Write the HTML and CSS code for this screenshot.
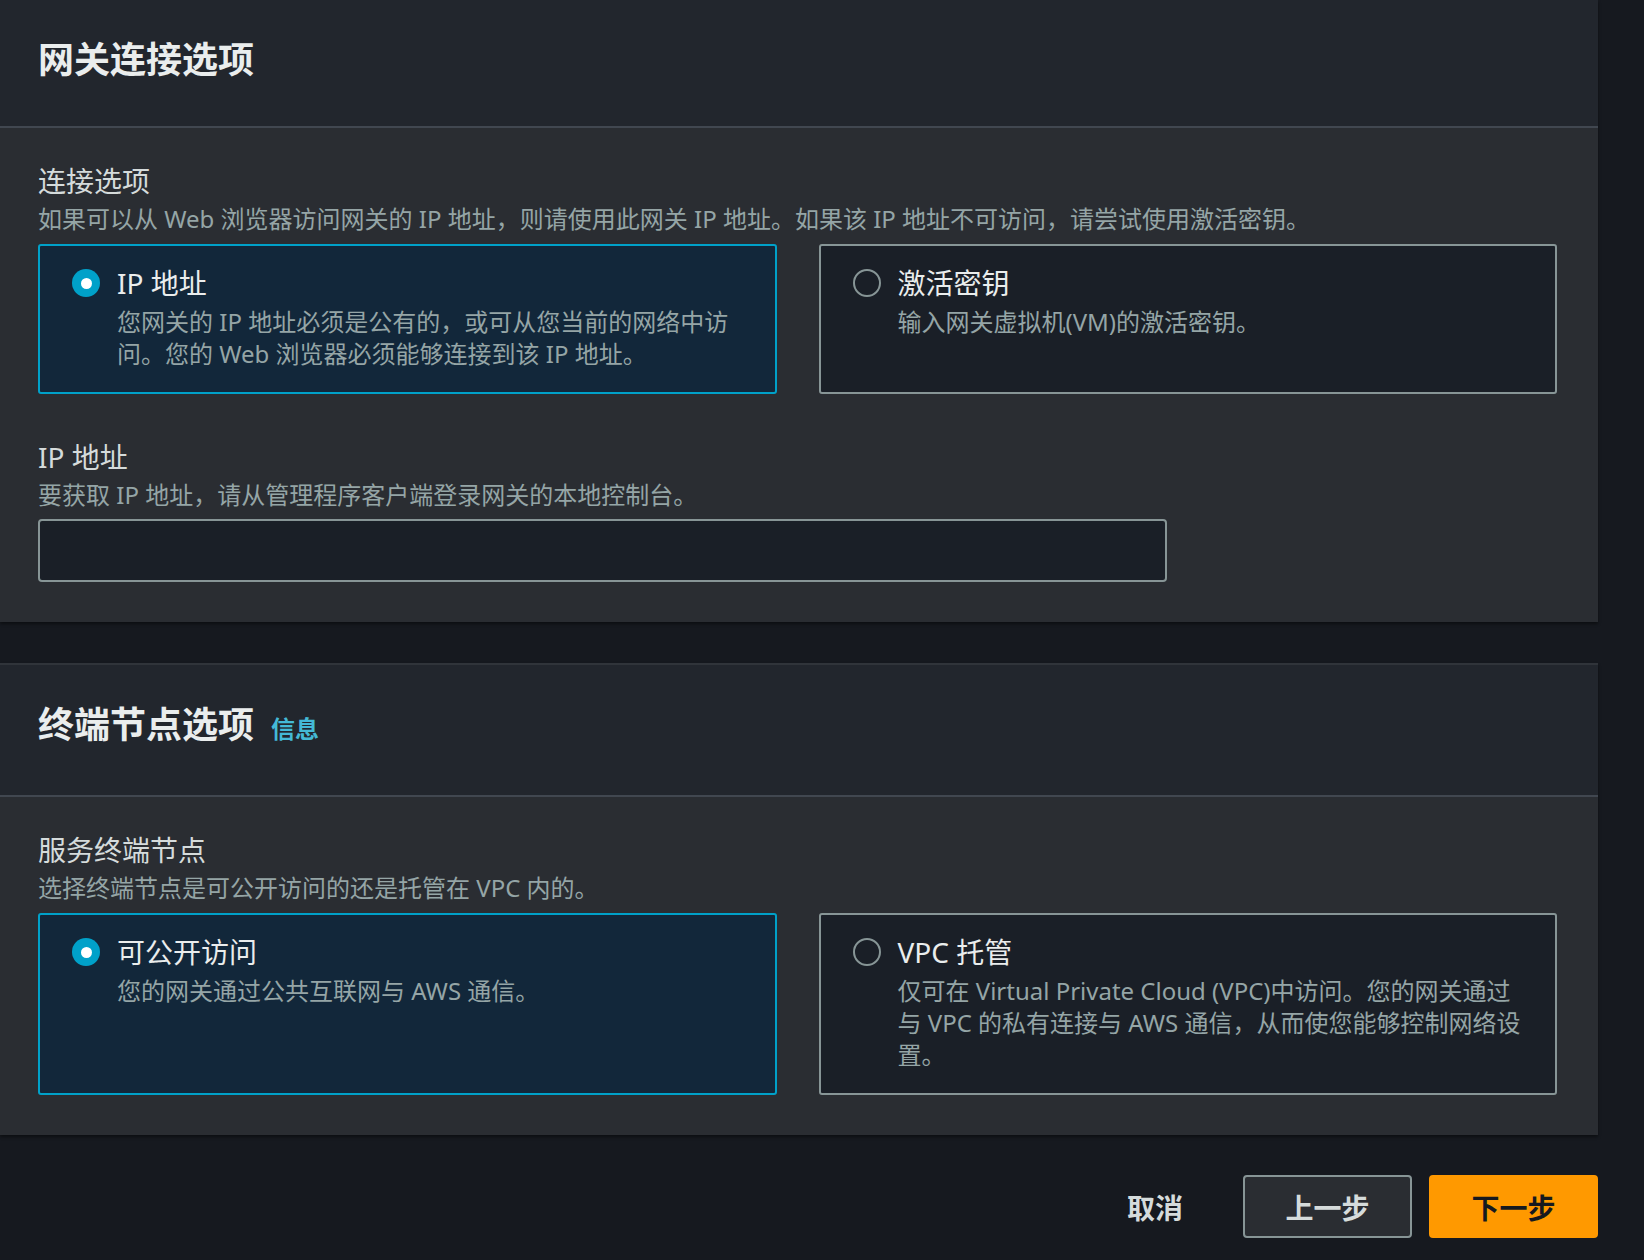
FILE: index.html
```html
<!DOCTYPE html>
<html lang="zh-CN">
<head>
<meta charset="utf-8">
<title>网关连接选项</title>
<link rel="stylesheet" href="styles.css">
</head>
<body>
<div class="page">
  <section class="panel panel-first">
    <header class="panel-header">
      <h2 class="panel-title">网关连接选项</h2>
    </header>
    <div class="panel-body">
      <div class="field">
        <div class="field-label">连接选项</div>
        <div class="field-desc">如果可以从 Web 浏览器访问网关的 IP 地址，则请使用此网关 IP 地址。如果该 IP 地址不可访问，请尝试使用激活密钥。</div>
        <div class="tiles">
          <div class="tile tile-selected">
            <span class="radio radio-on"><span class="radio-dot"></span></span>
            <div class="tile-text">
              <div class="tile-title">IP 地址</div>
              <div class="tile-desc">您网关的 IP 地址必须是公有的，或可从您当前的网络中访问。您的 Web 浏览器必须能够连接到该 IP 地址。</div>
            </div>
          </div>
          <div class="tile">
            <span class="radio"></span>
            <div class="tile-text">
              <div class="tile-title">激活密钥</div>
              <div class="tile-desc">输入网关虚拟机(VM)的激活密钥。</div>
            </div>
          </div>
        </div>
      </div>
      <div class="field field-ip">
        <div class="field-label">IP 地址</div>
        <div class="field-desc">要获取 IP 地址，请从管理程序客户端登录网关的本地控制台。</div>
        <input class="text-input" type="text" aria-label="IP 地址">
      </div>
    </div>
  </section>

  <section class="panel panel-second">
    <header class="panel-header">
      <h2 class="panel-title">终端节点选项<a class="info-link" href="#">信息</a></h2>
    </header>
    <div class="panel-body">
      <div class="field">
        <div class="field-label">服务终端节点</div>
        <div class="field-desc">选择终端节点是可公开访问的还是托管在 VPC 内的。</div>
        <div class="tiles">
          <div class="tile tile-selected">
            <span class="radio radio-on"><span class="radio-dot"></span></span>
            <div class="tile-text">
              <div class="tile-title">可公开访问</div>
              <div class="tile-desc">您的网关通过公共互联网与 AWS 通信。</div>
            </div>
          </div>
          <div class="tile">
            <span class="radio"></span>
            <div class="tile-text">
              <div class="tile-title">VPC 托管</div>
              <div class="tile-desc">仅可在 Virtual Private Cloud (VPC)中访问。您的网关通过与 VPC 的私有连接与 AWS 通信，从而使您能够控制网络设置。</div>
            </div>
          </div>
        </div>
      </div>
    </div>
  </section>

  <div class="footer">
    <button class="btn btn-link" type="button">取消</button>
    <button class="btn btn-normal" type="button">上一步</button>
    <button class="btn btn-primary" type="button">下一步</button>
  </div>
</div>
</body>
</html>
```

FILE: styles.css
```css
* {
  box-sizing: border-box;
}

html, body {
  margin: 0;
  padding: 0;
}

body {
  background: #16191f;
  font-family: "Noto Sans", "Noto Sans CJK SC", sans-serif;
  color: #d5dbdb;
  width: 1644px;
  height: 1260px;
  overflow: hidden;
}

.page {
  width: 1598px;
}

.panel {
  background: #2a2d32;
  box-shadow: 0 2px 3px rgba(0, 0, 0, 0.45);
}

.panel-second {
  margin-top: 41px;
  border-top: 2px solid #30343a;
}

.panel-header {
  background: #22262d;
  padding: 37px 41px 43px 38px;
  border-bottom: 2px solid #414750;
}

.panel-title {
  margin: 0;
  font-size: 36px;
  line-height: 46px;
  font-weight: 700;
  color: #eaeded;
  display: flex;
  align-items: baseline;
}

.info-link {
  margin-left: 17px;
  font-size: 24px;
  font-weight: 700;
  color: #44b9d6;
  text-decoration: none;
}

.panel-body {
  padding: 34px 41px 40px 38px;
}

.field-label {
  font-size: 28px;
  line-height: 38px;
  color: #d5dbdb;
}

.field-desc {
  margin-top: 3px;
  font-size: 24px;
  line-height: 32px;
  color: #95a5a6;
}

.field-ip {
  margin-top: 44px;
}

.tiles {
  margin-top: 9px;
  display: grid;
  grid-template-columns: 1fr 1fr;
  gap: 42px;
}

.tile {
  display: flex;
  align-items: flex-start;
  gap: 17px;
  padding: 18px 31px 22px 32px;
  background: #1a1f27;
  border: 2px solid #879596;
  border-radius: 3px;
}

.tile-selected {
  background: #12273a;
  border-color: #00a1c9;
}

.radio {
  flex: none;
  width: 28px;
  height: 28px;
  margin-top: 5px;
  border: 2px solid #879596;
  border-radius: 50%;
  display: flex;
  align-items: center;
  justify-content: center;
}

.radio-on {
  border: none;
  background: #00a1c9;
}

.radio-dot {
  width: 11px;
  height: 11px;
  border-radius: 50%;
  background: #ffffff;
}

.tile-text {
  min-width: 0;
}

.tile-title {
  font-size: 28px;
  line-height: 38px;
  color: #eaeded;
}

.tile-desc {
  margin-top: 4px;
  font-size: 24px;
  line-height: 32px;
  color: #95a5a6;
}

.text-input {
  display: block;
  margin-top: 8px;
  width: 1129px;
  height: 63px;
  background: #1a1f27;
  border: 2px solid #879596;
  border-radius: 4px;
  outline: none;
  color: #d5dbdb;
  font: inherit;
  font-size: 24px;
  padding: 0 16px;
}

.footer {
  margin-top: 40px;
  display: flex;
  justify-content: flex-end;
  align-items: center;
  gap: 17px;
}

.btn {
  height: 63px;
  font-family: "Noto Sans", "Noto Sans CJK SC", sans-serif;
  font-size: 28px;
  font-weight: 700;
  border-radius: 4px;
  cursor: pointer;
  padding: 0;
}

.btn-link {
  background: transparent;
  border: none;
  color: #d5dbdb;
  padding: 0 43px 0 30px;
}

.btn-normal {
  width: 169px;
  background: #2a2d32;
  border: 2px solid #879596;
  color: #d5dbdb;
}

.btn-primary {
  width: 169px;
  background: #ff9900;
  border: 2px solid #ff9900;
  color: #16191f;
}
```
